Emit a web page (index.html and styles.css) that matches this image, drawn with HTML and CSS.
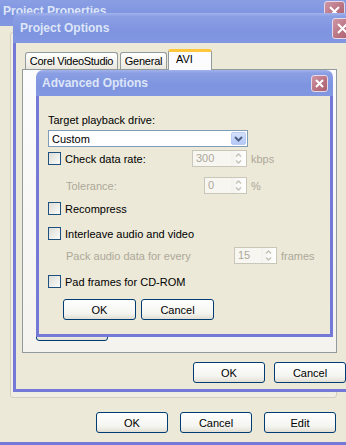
FILE: index.html
```html
<html lang="en">
<head>
    <meta charset="UTF-8">
    <meta name="viewport" content="width=device-width, initial-scale=1.0">
    <title>Advanced Options</title>
    <link rel="stylesheet" href="styles.css">
</head>
<body>
    <div class="desktop">

        <!-- back window -->
        <div class="window props">
            <div class="titlebar">
                <span class="title">Project Properties</span>
                <span class="close"><svg width="13" height="13" viewBox="0 0 13 13"><path d="M2 2 L11 11 M11 2 L2 11" stroke="#fff" stroke-width="2"/></svg></span>
            </div>
            <div class="client props-client">
                <div class="props-panel"></div>
                <div class="button-row">
                    <button class="button">OK</button>
                    <button class="button">Cancel</button>
                    <button class="button">Edit</button>
                </div>
            </div>
        </div>

        <!-- middle window -->
        <div class="window options">
            <div class="titlebar">
                <span class="title">Project Options</span>
                <span class="close"><svg width="13" height="13" viewBox="0 0 13 13"><path d="M2 2 L11 11 M11 2 L2 11" stroke="#fff" stroke-width="2"/></svg></span>
            </div>
            <div class="client options-client">
                <div class="tabs">
                    <span class="tab tab-corel">Corel VideoStudio</span>
                    <span class="tab tab-general">General</span>
                    <span class="tab selected">AVI</span>
                </div>
                <div class="tab-panel">
                    <button class="button panel-button"></button>
                </div>
                <div class="button-row">
                    <button class="button">OK</button>
                    <button class="button">Cancel</button>
                </div>
            </div>
        </div>

        <!-- front dialog -->
        <div class="window advanced">
            <div class="titlebar">
                <span class="title">Advanced Options</span>
                <span class="close"><svg width="11" height="11" viewBox="0 0 11 11"><path d="M2 2 L9 9 M9 2 L2 9" stroke="#fff" stroke-width="2"/></svg></span>
            </div>
            <div class="client advanced-client">
                <div class="field-label">Target playback drive:</div>
                <div class="select">
                    <span class="select-text">Custom</span>
                    <span class="drop"><svg width="9" height="6" viewBox="0 0 9 6"><path d="M1 1 L4.5 4.5 L8 1" stroke="#4d6185" stroke-width="2" fill="none"/></svg></span>
                </div>

                <div class="row row-rate">
                    <span class="lead lead-rate"><span class="check"></span>Check data rate:</span>
                    <span class="spin spin-wide"><span class="spin-value">300</span><span class="spin-btns">
                        <svg width="7" height="4" viewBox="0 0 7 4"><path d="M1 3.5 L3.5 1 L6 3.5" stroke="#c4c1b6" stroke-width="1.4" fill="none"/></svg>
                        <svg width="7" height="4" viewBox="0 0 7 4"><path d="M1 0.5 L3.5 3 L6 0.5" stroke="#c4c1b6" stroke-width="1.4" fill="none"/></svg>
                    </span></span>
                    <span class="unit">kbps</span>
                </div>

                <div class="row row-tolerance">
                    <span class="lead lead-tolerance disabled">Tolerance:</span>
                    <span class="spin"><span class="spin-value">0</span><span class="spin-btns">
                        <svg width="7" height="4" viewBox="0 0 7 4"><path d="M1 3.5 L3.5 1 L6 3.5" stroke="#c4c1b6" stroke-width="1.4" fill="none"/></svg>
                        <svg width="7" height="4" viewBox="0 0 7 4"><path d="M1 0.5 L3.5 3 L6 0.5" stroke="#c4c1b6" stroke-width="1.4" fill="none"/></svg>
                    </span></span>
                    <span class="unit">%</span>
                </div>

                <div class="row row-recompress">
                    <span class="lead"><span class="check"></span>Recompress</span>
                </div>

                <div class="row row-interleave">
                    <span class="lead"><span class="check"></span>Interleave audio and video</span>
                </div>

                <div class="row row-pack">
                    <span class="lead lead-pack disabled">Pack audio data for every</span>
                    <span class="spin"><span class="spin-value">15</span><span class="spin-btns">
                        <svg width="7" height="4" viewBox="0 0 7 4"><path d="M1 3.5 L3.5 1 L6 3.5" stroke="#c4c1b6" stroke-width="1.4" fill="none"/></svg>
                        <svg width="7" height="4" viewBox="0 0 7 4"><path d="M1 0.5 L3.5 3 L6 0.5" stroke="#c4c1b6" stroke-width="1.4" fill="none"/></svg>
                    </span></span>
                    <span class="unit">frames</span>
                </div>

                <div class="row row-pad">
                    <span class="lead"><span class="check"></span>Pad frames for CD-ROM</span>
                </div>

                <div class="dialog-buttons">
                    <button class="button">OK</button>
                    <button class="button">Cancel</button>
                </div>
            </div>
        </div>

    </div>
</body>
</html>
```

FILE: styles.css
```css
body {
    margin: 0;
    font-family: 'Liberation Sans', Arial, sans-serif;
    font-size: 11px;
    color: #000;
}

.desktop {
    position: relative;
    width: 346px;
    height: 445px;
    overflow: hidden;
    background: #ece9d8;
}

/* window frames */
.window {
    position: absolute;
    display: flex;
    flex-direction: column;
    box-sizing: border-box;
}

.titlebar {
    display: flex;
    align-items: center;
    justify-content: space-between;
    flex: none;
    border-radius: 7px 7px 0 0;
    background: linear-gradient(#a3b3ec, #8a9fe3 12%, #7e94e0 60%, #8197e0);
    box-sizing: border-box;
}

.title {
    color: #dde5f8;
    font-weight: bold;
    font-size: 12px;
    white-space: nowrap;
}

.close {
    display: flex;
    align-items: center;
    justify-content: center;
    box-sizing: border-box;
    border: 1px solid #e6d8e6;
    border-radius: 3px;
    background: linear-gradient(135deg, #cf97a6, #b8707f 60%, #a9606f);
}

.client {
    flex: 1;
    display: flex;
    flex-direction: column;
    background: #ece9d8;
    border: 3px solid #7479d8;
    border-top: none;
    box-sizing: border-box;
}

.props {
    left: -6px;
    top: -4px;
    width: 356px;
    height: 449px;
}

.props .titlebar {
    height: 30px;
    padding: 0 5px 0 9px;
}

.props .close {
    width: 21px;
    height: 21px;
}

.options {
    left: 13px;
    top: 13px;
    width: 345px;
    height: 379px;
}

.options .titlebar {
    height: 30px;
    padding: 0 5px 0 7px;
}

.options .close {
    width: 21px;
    height: 21px;
}

.advanced {
    left: 36px;
    top: 70px;
    width: 297px;
    height: 267px;
}

.advanced .titlebar {
    height: 26px;
    padding: 0 5px 0 6px;
}

.advanced .close {
    width: 17px;
    height: 17px;
}

/* buttons */
.button {
    width: 72px;
    height: 21px;
    padding: 0;
    border: 1px solid #003c74;
    border-radius: 3px;
    background: linear-gradient(#ffffff, #f4f4f0 70%, #e2dfd3);
    font-family: 'Liberation Sans', Arial, sans-serif;
    font-size: 11px;
    color: #000;
    box-sizing: border-box;
}

.button-row {
    display: flex;
    justify-content: flex-end;
    gap: 12px;
    flex: none;
}

/* back window content */
.props-client {
    padding: 6px 10px 9px 13px;
}

.props-panel {
    flex: 1;
    border: 1px solid #d2cfc0;
    border-radius: 3px;
    background: #f1efe5;
}

.props-client .button-row {
    margin-top: 14px;
    margin-right: 1px;
}

/* middle window content */
.options-client {
    padding: 6px 9px 6px 6px;
}

.tabs {
    display: flex;
    align-items: flex-end;
    height: 20px;
    padding-left: 3px;
    gap: 2px;
    flex: none;
    position: relative;
    z-index: 1;
}

.tab {
    height: 17px;
    line-height: 17px;
    padding: 0;
    text-align: center;
    border: 1px solid #919b9c;
    border-bottom: none;
    border-radius: 3px 3px 0 0;
    background: linear-gradient(#ffffff, #f3f2ec 60%, #e8e6dc);
    box-sizing: border-box;
    white-space: nowrap;
    overflow: hidden;
}

.tab-corel { width: 93px; letter-spacing: -0.3px; }
.tab-general { width: 47px; letter-spacing: -0.2px; }

.tab.selected {
    height: 21px;
    width: 44px;
    line-height: 15px;
    padding: 0 7px;
    text-align: left;
    margin-bottom: -1px;
    border-top: 3px solid #ffc83c;
    background: #fcfcfe;
    margin-left: -1px;
}

.tab-panel {
    flex: 1;
    display: flex;
    flex-direction: column;
    justify-content: flex-end;
    margin-right: 9px;
    border: 1px solid #919b9c;
    background: linear-gradient(#fcfcfe, #f4f3ee);
}

.panel-button {
    margin: 0 0 11px 13px;
}

.options-client .button-row {
    margin-top: 9px;
    gap: 9px;
}

/* front dialog content */
.advanced-client {
    padding: 18px 9px 14px 9px;
}

.field-label {
    height: 13px;
    line-height: 13px;
}

.select {
    display: flex;
    align-items: center;
    justify-content: space-between;
    width: 200px;
    height: 17px;
    margin-top: 3px;
    padding: 0 1px 0 3px;
    border: 1px solid #7f9db9;
    background: #fff;
    box-sizing: border-box;
}

.drop {
    display: flex;
    align-items: center;
    justify-content: center;
    width: 15px;
    height: 13px;
    border: 1px solid #b9cbf4;
    border-radius: 2px;
    background: linear-gradient(#d5e1fc, #b4c8f6);
    box-sizing: border-box;
}

.row {
    display: flex;
    align-items: center;
    height: 17px;
}

.row-rate { margin-top: 3px; }
.row-tolerance { margin-top: 10px; }
.row-recompress { margin-top: 6px; }
.row-interleave { margin-top: 8px; }
.row-pack { margin-top: 5px; }
.row-pad { margin-top: 9px; }

.lead {
    display: flex;
    align-items: center;
    white-space: nowrap;
}

.lead-rate { width: 144px; }
.lead-tolerance { width: 138px; padding-left: 18px; }
.lead-pack { width: 168px; padding-left: 18px; }

.disabled,
.unit {
    color: #aca899;
}

.unit {
    margin-left: 4px;
}

.check {
    width: 13px;
    height: 13px;
    margin-right: 4px;
    border: 1px solid #1c5180;
    background: linear-gradient(135deg, #dcdcd7, #fbfbf9);
    box-sizing: border-box;
}

.spin {
    display: flex;
    width: 43px;
    height: 17px;
    border: 1px solid #c9c7ba;
    background: #f7f6f1;
    box-sizing: border-box;
}

.spin-wide {
    width: 55px;
}

.spin-value {
    flex: 1;
    padding-left: 3px;
    line-height: 15px;
    color: #aca899;
}

.spin-btns {
    display: flex;
    flex-direction: column;
    align-items: center;
    justify-content: center;
    gap: 3px;
    width: 15px;
    background: linear-gradient(90deg, #f3f2ee, #ffffff);
}

.dialog-buttons {
    display: flex;
    gap: 5px;
    margin-top: 9px;
    padding-left: 15px;
}

.dialog-buttons .button {
    width: 73px;
}
```
